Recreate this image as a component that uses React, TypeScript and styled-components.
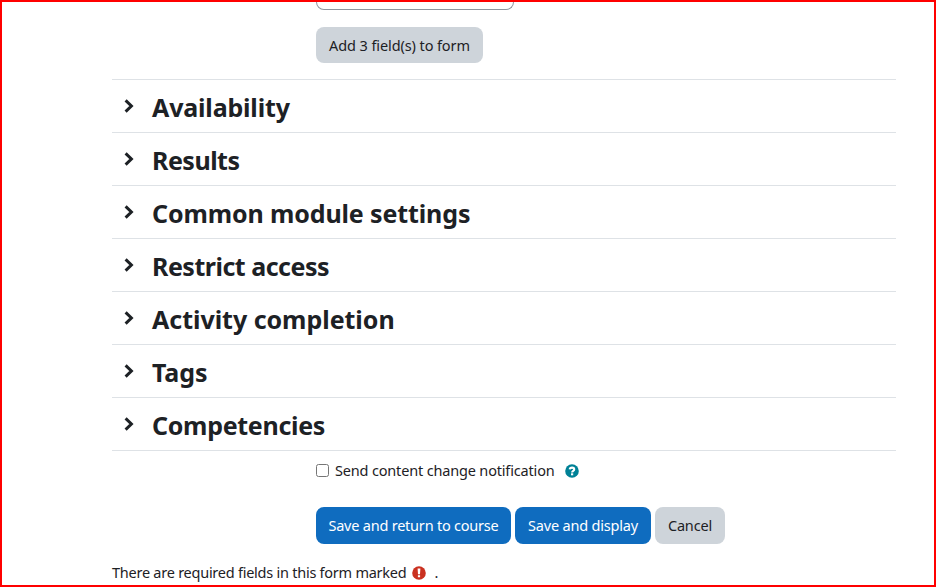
import React from "react";
import styled, { createGlobalStyle } from "styled-components";

const GlobalStyle = createGlobalStyle`
  * { box-sizing: border-box; }
  body {
    margin: 0;
    background: #fff;
    color: #1d2125;
    font: 400 15px/22px "Segoe UI", "Noto Sans", "Open Sans", sans-serif;
  }
`;

const Frame = styled.main`
  width: 936px;
  height: 587px;
  padding: 0 38px 0 110px;
  border: 2px solid #ff0000;
  background: #fff;
  overflow: hidden;
  white-space: nowrap;
`;

const FieldColumn = styled.div`
  display: flex;
  flex-direction: column;
  align-items: flex-start;
  gap: 17px;
  height: 77px;
  padding-left: 204px;
`;

const FieldEnd = styled.div`
  width: 198px;
  height: 8px;
  flex: none;
  border: 1px solid #8f959e;
  border-top: 0;
  border-radius: 0 0 8px 8px;
`;

const Button = styled.button<{ $primary?: boolean; $width: number; $height?: number; $spacing: number }>`
  display: flex;
  flex: none;
  align-items: center;
  justify-content: center;
  width: ${(p) => p.$width}px;
  height: ${(p) => p.$height ?? 37}px;
  padding: 0 0 ${(p) => (p.$height ? 0 : 2)}px;
  border: 0;
  border-radius: 8px;
  background: ${(p) => (p.$primary ? "#0f6cbf" : "#ced4da")};
  color: ${(p) => (p.$primary ? "#fff" : "#1d2125")};
  font: inherit;
  font-size: 14.5px;
  letter-spacing: ${(p) => p.$spacing}px;
  white-space: nowrap;
`;

const Section = styled.section`
  display: flex;
  height: 53px;
  border-top: 1px solid #dee2e6;
`;

const Chevron = styled.svg`
  flex: none;
  width: 11px;
  height: 16px;
  margin: 18px 17px 0 12px;
`;

const Heading = styled.h3<{ $spacing: number }>`
  margin: 11px 0 0;
  font-size: 25px;
  line-height: 32px;
  font-weight: 700;
  letter-spacing: ${(p) => p.$spacing}px;
`;

const NotifyRow = styled.div`
  display: flex;
  align-items: center;
  height: 41px;
  padding: 0 0 2px 204px;
  border-top: 1px solid #dee2e6;
`;

const Checkbox = styled.input`
  width: 13px;
  height: 13px;
  margin: 0 6px 0 0;
`;

const Label = styled.label<{ $width: number; $spacing: number }>`
  width: ${(p) => p.$width}px;
  font-size: 14.5px;
  letter-spacing: ${(p) => p.$spacing}px;
`;

const Badge = styled.svg`
  flex: none;
  width: 14px;
  height: 14px;
  margin-top: 2px;
`;

const Actions = styled.div`
  display: flex;
  gap: 4px;
  margin-top: 16px;
  padding-left: 204px;
`;

const Footnote = styled.p`
  display: flex;
  align-items: center;
  margin: 17px 0 0;
`;

const sections = [
  { title: "Availability", spacing: -0.17 },
  { title: "Results", spacing: -0.5 },
  { title: "Common module settings", spacing: -0.12 },
  { title: "Restrict access", spacing: -0.49 },
  { title: "Activity completion", spacing: -0.03 },
  { title: "Tags", spacing: -0.1 },
  { title: "Competencies", spacing: -0.3 },
];

export default function App() {
  return (
    <>
      <GlobalStyle />
      <Frame>
        <FieldColumn>
          <FieldEnd />
          <Button $width={167} $height={36} $spacing={-0.1}>Add 3 field(s) to form</Button>
        </FieldColumn>
        {sections.map((s) => (
          <Section key={s.title}>
            <Chevron viewBox="0 0 11 16" fill="none" stroke="#1d2125" strokeWidth="3">
              <path d="M1.6 2.4 L7.4 8 L1.6 13.6" />
            </Chevron>
            <Heading $spacing={s.spacing}>{s.title}</Heading>
          </Section>
        ))}
        <NotifyRow>
          <Checkbox type="checkbox" id="notify" />
          <Label htmlFor="notify" $width={230} $spacing={-0.17}>Send content change notification</Label>
          <Badge viewBox="0 0 14 14">
            <circle cx="7" cy="7" r="6.8" fill="#008196" />
            <path d="M4.7 5.3 C5 3.1 9.2 3 9.2 5.4 C9.2 6.8 7.1 6.8 7.1 8.4" fill="none" stroke="#fff" strokeWidth="2.1" />
            <rect x="6" y="9.3" width="2.2" height="2" fill="#fff" />
          </Badge>
        </NotifyRow>
        <Actions>
          <Button $primary $width={195} $spacing={-0.22}>Save and return to course</Button>
          <Button $primary $width={136} $spacing={-0.2}>Save and display</Button>
          <Button $width={70} $spacing={-0.15}>Cancel</Button>
        </Actions>
        <Footnote>
          <Label as="span" $width={300} $spacing={-0.25}>There are required fields in this form marked</Label>
          <Badge viewBox="0 0 14 14">
            <circle cx="7" cy="7" r="6.8" fill="#ca3120" />
            <path d="M5.6 2.5 h2.8 l-.4 5.7 h-2z M5.9 9.2 h2.2 v2.1 h-2.2z" fill="#fff" />
          </Badge>
          <Label as="span" $width={20} $spacing={0.5}>&nbsp; .</Label>
        </Footnote>
      </Frame>
    </>
  );
}
